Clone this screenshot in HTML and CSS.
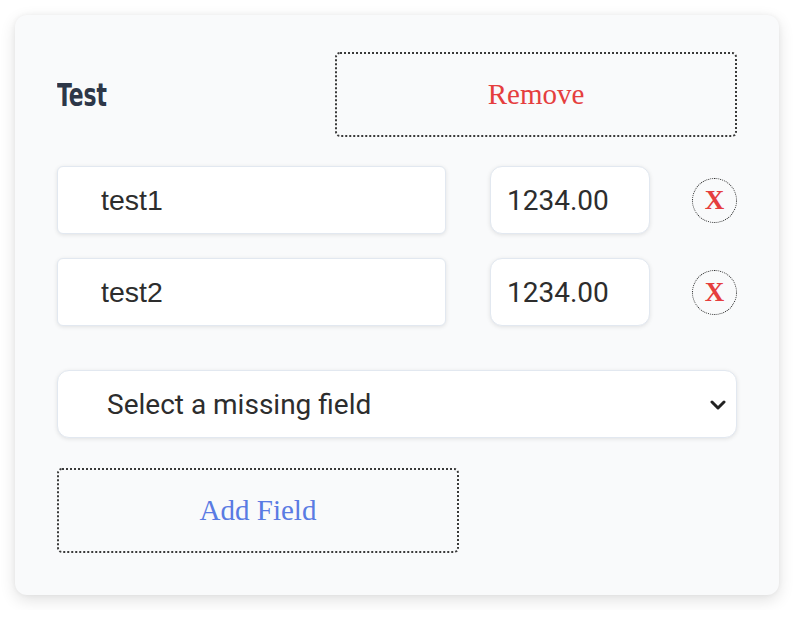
FILE: index.html
```html
<!DOCTYPE html>
<html lang="en">
<head>
<meta charset="utf-8">
<title>Fields</title>
<link rel="stylesheet" href="styles.css">
</head>
<body>
<div class="card">
  <div class="header">
    <h2 class="title">Test</h2>
    <button class="btn btn-remove" type="button">Remove</button>
  </div>
  <div class="rows">
    <div class="row">
      <input class="name-input" type="text" value="test1">
      <input class="num-input" type="text" value="1234.00">
      <button class="del" type="button">X</button>
    </div>
    <div class="row">
      <input class="name-input" type="text" value="test2">
      <input class="num-input" type="text" value="1234.00">
      <button class="del" type="button">X</button>
    </div>
  </div>
  <div class="select-wrap">
    <select class="select">
      <option>Select a missing field</option>
    </select>
    <svg class="chev" width="16" height="10" viewBox="0 0 16 10"><path d="M2 2 L8 8 L14 2" fill="none" stroke="#222" stroke-width="3" stroke-linecap="round" stroke-linejoin="round"/></svg>
  </div>
  <button class="btn btn-add" type="button">Add Field</button>
</div>
</body>
</html>
```
FILE: styles.css
```css
* { box-sizing: border-box; }
html, body { margin: 0; padding: 0; background: #ffffff; }
body { padding: 15px; }

.card {
  width: 764px;
  height: 580px;
  background: #f9fafb;
  border-radius: 12px;
  box-shadow: 0 5px 16px rgba(0, 0, 0, 0.12), 0 0 5px rgba(0, 0, 0, 0.05);
  padding: 37px 42px 42px 42px;
  display: flex;
  flex-direction: column;
}

.header {
  display: flex;
  justify-content: space-between;
  align-items: center;
}

.title {
  margin: 0;
  font-family: "DejaVu Sans Condensed", "Liberation Sans", sans-serif;
  font-weight: bold;
  font-size: 32px;
  color: #2d3748;
  transform: scaleX(0.76);
  transform-origin: left center;
}

.btn {
  width: 402px;
  height: 85px;
  background: transparent;
  border: 2px dotted #3a3a3a;
  border-radius: 5px;
  font-family: "Liberation Serif", "DejaVu Serif", serif;
  font-size: 29px;
  cursor: pointer;
}
.btn-remove { color: #e53e3e; }
.btn-add { color: #5a7be3; margin-top: 30px; }

.rows {
  margin-top: 29px;
  display: flex;
  flex-direction: column;
  gap: 24px;
}
.row {
  display: flex;
  align-items: center;
}

.name-input, .num-input, .select {
  height: 68px;
  background: #ffffff;
  border: 1px solid #e2e8f0;
  box-shadow: 0 1px 4px rgba(0, 0, 0, 0.10);
  color: #2d2d2d;
  outline: none;
}

.name-input {
  width: 389px;
  border-radius: 6px;
  padding: 0 0 0 43px;
  font-family: "Liberation Sans", Arial, sans-serif;
  font-size: 28.5px;
}

.num-input {
  width: 160px;
  margin-left: 44px;
  border-radius: 12px;
  padding: 0 0 0 16px;
  font-family: Roboto, "Liberation Sans", sans-serif;
  font-size: 28px;
}

.del {
  width: 45px;
  height: 45px;
  margin-left: 42px;
  border-radius: 50%;
  border: 1.5px dotted #222;
  background: transparent;
  color: #e53e3e;
  font-family: "Liberation Serif", "DejaVu Serif", serif;
  font-weight: bold;
  font-size: 27px;
  padding: 0;
  line-height: 1;
  display: flex;
  align-items: center;
  justify-content: center;
}

.select-wrap {
  margin-top: 44px;
  position: relative;
}
.select {
  width: 100%;
  border-radius: 12px;
  padding: 0 0 0 49px;
  font-family: Roboto, "Liberation Sans", sans-serif;
  font-size: 28px;
  appearance: none;
  -webkit-appearance: none;
}
.chev {
  position: absolute;
  right: 11px;
  top: 30px;
}
```
